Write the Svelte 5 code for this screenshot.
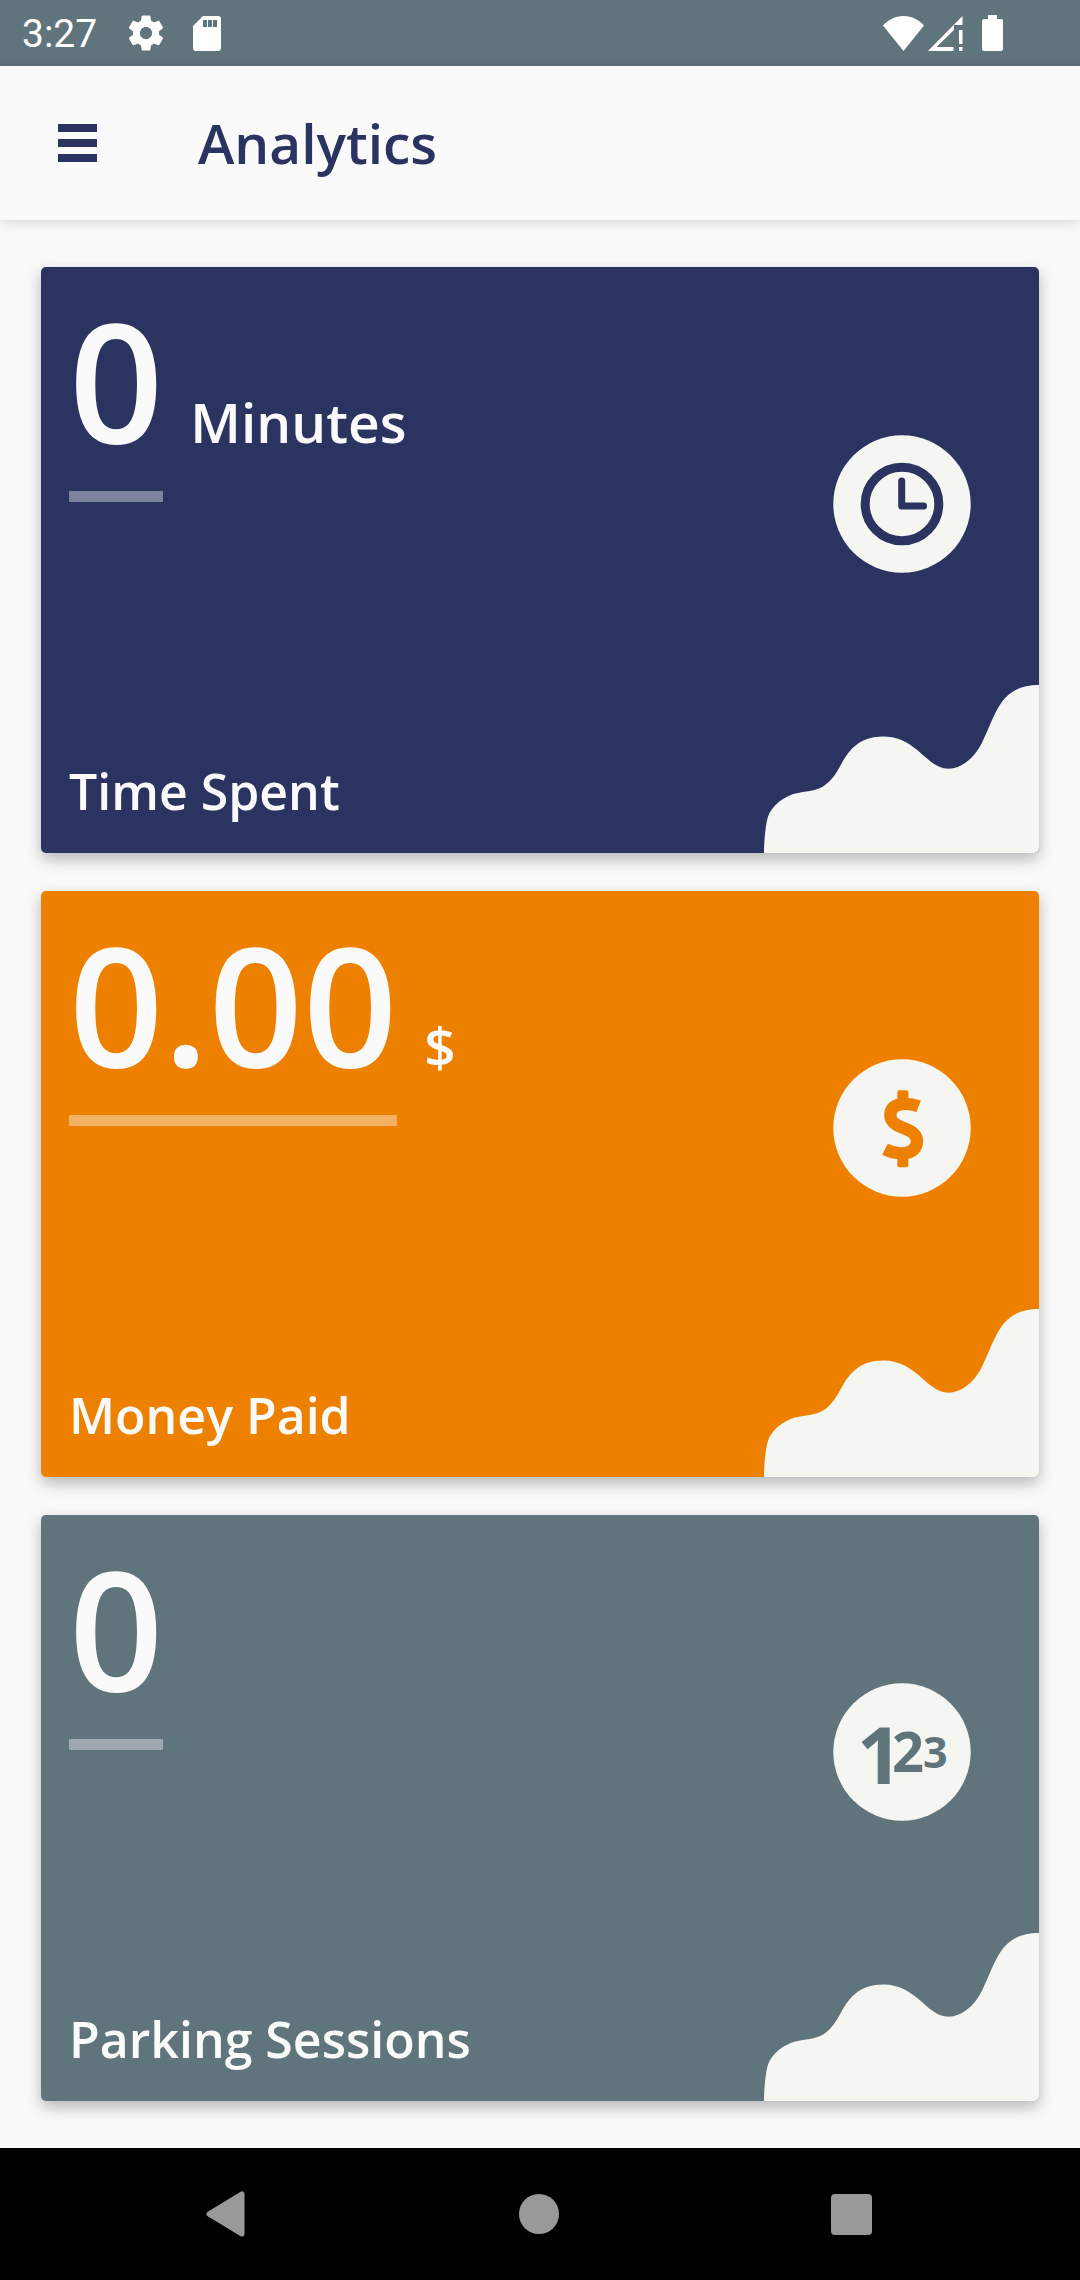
<script>
  const cards = [
    { value: '0', unit: 'Minutes', label: 'Time Spent', color: '#2b3361', icon: 'clock' },
    { value: '0.00', unit: '$', label: 'Money Paid', color: '#ee8000', icon: 'dollar' },
    { value: '0', unit: '', label: 'Parking Sessions', color: '#60747c', icon: 'numbers' }
  ];
</script>

<div class="screen">
  <div class="status-bar">
    <span class="time">3:27</span>
    <svg class="gear" width="42" height="42" viewBox="0 0 24 24" aria-hidden="true">
      <path d="M19.43 12.98c.04-.32.07-.64.07-.98s-.03-.66-.07-.98l2.11-1.65c.19-.15.24-.42.12-.64l-2-3.46c-.12-.22-.39-.3-.61-.22l-2.49 1c-.52-.4-1.08-.73-1.69-.98l-.38-2.65C14.46 2.18 14.25 2 14 2h-4c-.25 0-.46.18-.49.42l-.38 2.65c-.61.25-1.17.59-1.69.98l-2.49-1c-.23-.09-.49 0-.61.22l-2 3.46c-.13.22-.07.49.12.64l2.11 1.65c-.04.32-.07.65-.07.98s.03.66.07.98l-2.11 1.65c-.19.15-.24.42-.12.64l2 3.46c.12.22.39.3.61.22l2.49-1c.52.4 1.08.73 1.69.98l.38 2.65c.03.24.24.42.49.42h4c.25 0 .46-.18.49-.42l.38-2.65c.61-.25 1.17-.59 1.69-.98l2.49 1c.23.09.49 0 .61-.22l2-3.46c.12-.22.07-.49-.12-.64l-2.11-1.65zM12 15.5c-1.93 0-3.5-1.57-3.5-3.5s1.57-3.5 3.5-3.5 3.5 1.57 3.5 3.5-1.57 3.5-3.5 3.5z" />
    </svg>
    <svg width="28" height="35" viewBox="0 0 28 35" aria-hidden="true">
      <path d="M10 0h15a3 3 0 0 1 3 3v29a3 3 0 0 1-3 3H3a3 3 0 0 1-3-3V10zM10 4v7h4V4zm5 0v7h4V4zm5 0v7h4V4z" fill-rule="evenodd" />
    </svg>
    <svg class="wifi" width="41" height="35" viewBox="0 0 41 35" aria-hidden="true">
      <path d="M0 9.500C5 4 12 0 20.500 0S36 4 41 9.500L20.500 35z" />
    </svg>
    <svg width="35" height="35" viewBox="0 0 35 35" aria-hidden="true">
      <path d="M34.500 0V9H26V14L8.500 31H25.500V35H0zM31 14h3.500v14H31zm0 17h3.500v4H31z" fill-rule="evenodd" />
    </svg>
    <svg class="battery" width="21" height="36" viewBox="0 0 21 36" aria-hidden="true">
      <path d="M6 0h9v4h4a2 2 0 0 1 2 2v28a2 2 0 0 1-2 2H2a2 2 0 0 1-2-2V6a2 2 0 0 1 2-2h4z" />
    </svg>
  </div>

  <header class="app-bar">
    <button class="menu" aria-label="Open menu">
      <span></span>
      <span></span>
      <span></span>
    </button>
    <h1>Analytics</h1>
  </header>

  <main class="cards">
    {#each cards as card}
      <section class="card" style="--card-color: {card.color}">
        <div class="info">
          <div class="figure">
            <span class="value">{card.value}</span>
            {#if card.unit}
              <span class="unit">{card.unit}</span>
            {/if}
          </div>
          <h2>{card.label}</h2>
        </div>
        <div class="art">
          <svg class="badge" viewBox="0 0 138 138" aria-hidden="true">
            <circle class="disc" cx="69" cy="69" r="68.700" />
            {#if card.icon === 'clock'}
              <g class="line">
                <circle cx="69" cy="69" r="36.800" stroke-width="9" />
                <path d="M68.700 46V71H90.500" stroke-width="7" stroke-linecap="round" stroke-linejoin="round" />
              </g>
            {:else if card.icon === 'dollar'}
              <g transform="translate(69 69) scale(.3333) translate(-305 -293)">
                <path class="line" d="M355 228C334 220 270 209 270 254C270 300 350 286 350 333C350 379 285 373 254 357" stroke-width="37" />
                <rect class="solid" x="291" y="180" width="33" height="36" rx="6" />
                <rect class="solid" x="291" y="374" width="33" height="37" rx="6" />
              </g>
            {:else}
              <text class="digits" font-size="79">
                <tspan x="24" y="101">1</tspan><tspan x="59" y="89" font-size="56">2</tspan><tspan x="90" y="85" font-size="43">3</tspan>
              </text>
            {/if}
          </svg>
          <svg class="wave" viewBox="72 856 825 502" preserveAspectRatio="none" aria-hidden="true">
            <path d="M72 1358C72 1330 76 1275 84 1250C94 1218 130 1192 160 1182C185 1174 225 1174 248 1160C300 1127 300 1075 345 1038C370 1018 395 1010 430 1010C530 1010 560 1106 625 1106C665 1106 700 1075 722 1036C768 950 775 856 897 856V1358Z" />
          </svg>
        </div>
      </section>
    {/each}
  </main>

  <nav class="nav-bar">
    <button aria-label="Back">
      <svg width="40" height="46" viewBox="0 0 40 46"><path d="M36 3V43L3 23z" stroke="#999" stroke-width="5" stroke-linejoin="round" /></svg>
    </button>
    <button aria-label="Home">
      <svg width="40" height="40" viewBox="0 0 40 40"><circle cx="20" cy="20" r="20" /></svg>
    </button>
    <button aria-label="Recent apps">
      <svg width="41" height="41" viewBox="0 0 41 41"><rect width="41" height="41" rx="4" /></svg>
    </button>
  </nav>
</div>

<style>
  :global(body) {
    margin: 0;
    background: #fafafa;
  }

  .screen {
    display: flex;
    flex-direction: column;
    min-height: 100vh;
    font-family: 'Open Sans', 'Noto Sans', sans-serif;
    font-weight: 600;
    color: #fafafa;
  }

  button {
    padding: 0;
    border: 0;
    background: none;
    cursor: pointer;
  }

  svg {
    display: block;
    flex: none;
  }

  h1,
  h2 {
    margin: 0;
    font-weight: 600;
  }

  .status-bar {
    display: flex;
    align-items: center;
    height: 66px;
    padding: 0 77px 0 22px;
    background: #60747c;
    fill: #fff;
  }

  .time {
    padding-top: 2px;
    font: 400 39px/46px Roboto, sans-serif;
    color: #fff;
  }

  .gear {
    margin: 0 26px 0 28px;
  }

  .wifi {
    margin-left: auto;
    margin-right: 4px;
  }

  .battery {
    margin-left: 19px;
  }

  .app-bar {
    position: relative;
    z-index: 1;
    display: flex;
    align-items: center;
    gap: 101px;
    height: 154px;
    padding: 0 58px;
    background: #fafafa;
    box-shadow: 0 2px 12px rgba(0, 0, 0, 0.16);
  }

  .menu {
    display: flex;
    flex-direction: column;
    gap: 7px;
    width: 39px;
  }

  .menu span {
    height: 8px;
    background: #2b3361;
  }

  h1 {
    padding-bottom: 2px;
    font-size: 55px;
    line-height: 75px;
    color: #2b3361;
  }

  .cards {
    display: flex;
    flex-direction: column;
    gap: 38px;
    margin-bottom: auto;
    padding: 47px 41px 19px;
    overflow: hidden;
  }

  .card {
    display: flex;
    justify-content: space-between;
    min-height: 586px;
    border-radius: 5px;
    background: var(--card-color);
    box-shadow: 0 6px 16px rgba(0, 0, 0, 0.28);
  }

  .info {
    display: flex;
    flex-direction: column;
    justify-content: space-between;
    padding: 0 0 28px 28px;
  }

  .figure {
    display: flex;
    align-items: baseline;
    gap: 27px;
  }

  .value {
    border-bottom: 11px solid rgba(250, 250, 250, 0.4);
    font-size: 165px;
    line-height: 224px;
  }

  .unit {
    font-size: 55px;
    line-height: 75px;
  }

  h2 {
    font-size: 50px;
    line-height: 68px;
  }

  .art {
    display: flex;
    flex-direction: column;
    justify-content: space-between;
    align-items: center;
    width: 275px;
    padding-top: 168px;
    border-bottom-right-radius: 5px;
    overflow: hidden;
  }

  .badge {
    width: 138px;
    height: 138px;
  }

  .disc,
  .wave {
    fill: #f5f6f1;
  }

  .line {
    fill: none;
    stroke: var(--card-color);
  }

  .solid,
  .digits {
    fill: var(--card-color);
  }

  .digits {
    font-weight: 700;
  }

  .wave {
    width: 100%;
    height: 168px;
  }

  .nav-bar {
    display: flex;
    align-items: center;
    justify-content: space-between;
    height: 132px;
    padding: 0 208px 0 206px;
    background: #000;
    fill: #999;
  }
</style>
